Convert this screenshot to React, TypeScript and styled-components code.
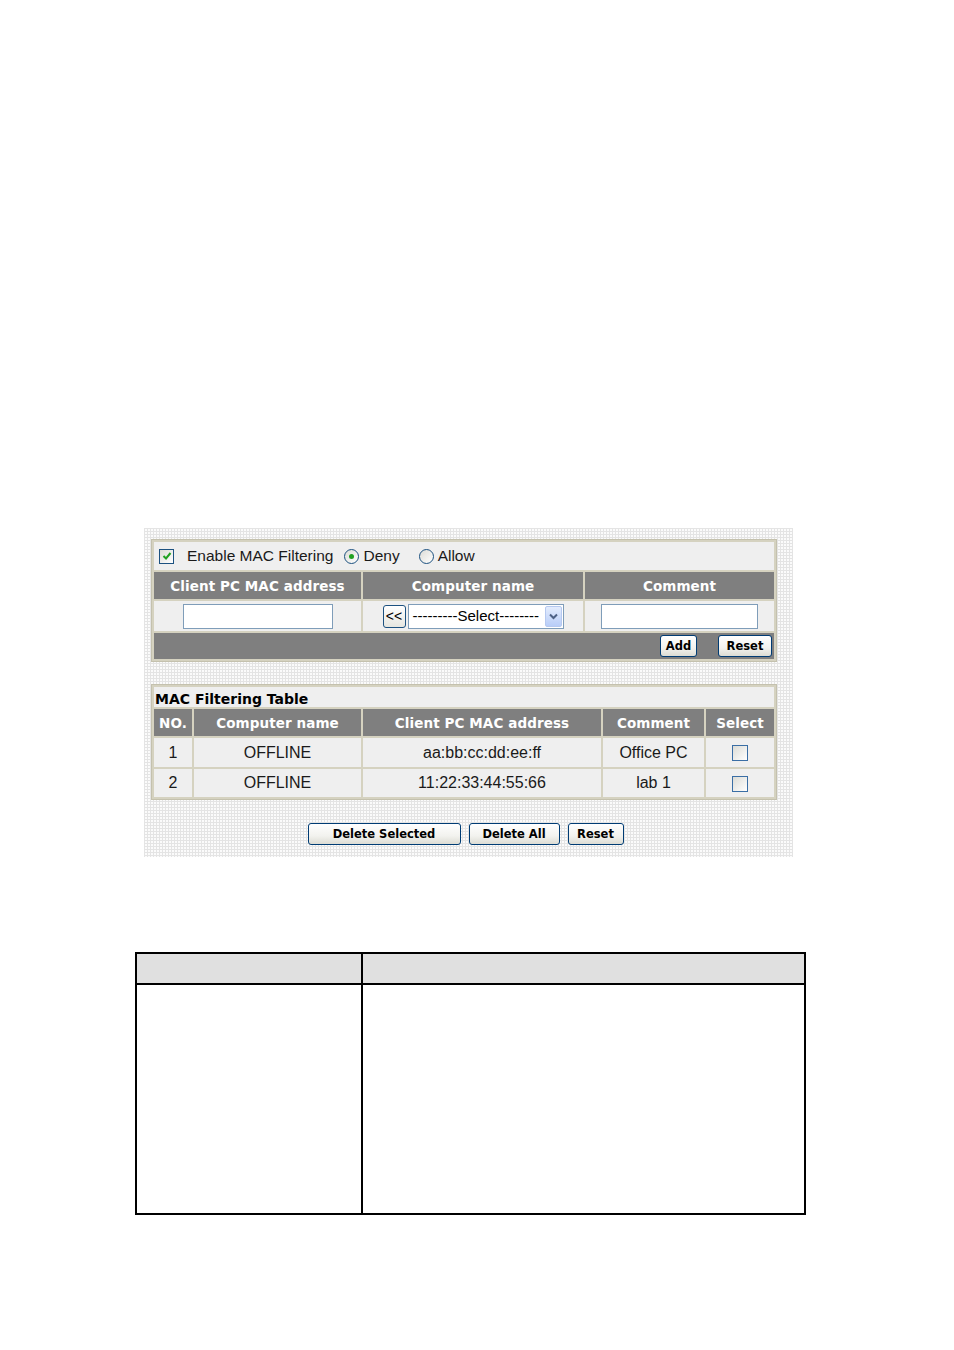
import React from 'react';
import styled, { createGlobalStyle } from 'styled-components';

const GlobalStyle = createGlobalStyle`
  html, body {
    margin: 0;
    padding: 0;
    background: #fff;
  }
  body {
    font-family: "Liberation Sans", Arial, sans-serif;
  }
`;

const Page = styled.div`
  width: 954px;
  height: 1350px;
  padding-top: 528px;
  box-sizing: border-box;
  display: flex;
  flex-direction: column;
`;

const Shot = styled.div`
  margin-left: 144px;
  width: 649px;
  height: 329px;
  box-sizing: border-box;
  padding: 11px 16px 0 7px;
  background-color: #fbfbfb;
  background-image: linear-gradient(#e4e4e4 1px, transparent 1px),
    linear-gradient(90deg, #e4e4e4 1px, transparent 1px);
  background-size: 3px 3px;
  display: flex;
  flex-direction: column;
`;

const Grid = styled.table<{ $mt?: number }>`
  width: 626px;
  box-sizing: border-box;
  margin-top: ${(p) => p.$mt ?? 0}px;
  border-collapse: separate;
  border-spacing: 2px;
  background: #d5d2c0;
  border: 1px solid #c4c1ae;
  table-layout: fixed;
`;

const Cell = styled.td<{ $h: number; $align?: string }>`
  height: ${(p) => p.$h}px;
  padding: 0;
  background: #efefef;
  text-align: ${(p) => p.$align ?? 'center'};
  font-size: 16px;
  line-height: 18px;
  color: #1a1a1a;
  vertical-align: middle;
`;

const Head = styled.td<{ $h: number }>`
  height: ${(p) => p.$h}px;
  padding: 0;
  background: #7f7f7f;
  color: #fff;
  text-align: center;
  font-family: "DejaVu Sans", Verdana, sans-serif;
  font-weight: bold;
  font-size: 13.5px;
  line-height: 16px;
  letter-spacing: 0.1px;
  white-space: nowrap;
`;

const BarCell = styled.td`
  height: 26px;
  padding: 0 2px 0 0;
  background: #7f7f7f;
  text-align: right;
  line-height: 16px;
`;

const TitleCell = styled.td`
  height: 20px;
  padding: 0 0 0 1px;
  background: #efefef;
  font-family: "DejaVu Sans", Verdana, sans-serif;
  font-weight: bold;
  font-size: 14px;
  color: #000;
  text-align: left;
  vertical-align: bottom;
  line-height: 16px;
`;

const Toggles = styled.div`
  display: flex;
  align-items: center;
  padding-left: 5px;
  font-size: 15.5px;
  color: #1a1a1a;
`;

const Check = styled.span`
  display: inline-flex;
  align-items: center;
  justify-content: center;
  width: 13px;
  height: 13px;
  border: 1px solid #1c5180;
  background: linear-gradient(135deg, #dcdcd6, #fff);
`;

const Radio = styled.span<{ $on?: boolean }>`
  display: inline-flex;
  align-items: center;
  justify-content: center;
  width: 13px;
  height: 13px;
  border-radius: 50%;
  border: 1px solid #1c5180;
  background: linear-gradient(135deg, #dcdcd6, #fff);
  margin-right: 4px;
  &::after {
    content: '';
    display: ${(p) => (p.$on ? 'block' : 'none')};
    width: 5px;
    height: 5px;
    border-radius: 50%;
    background: #21a121;
  }
`;

const Label = styled.span<{ $ml?: number }>`
  margin-left: ${(p) => p.$ml ?? 0}px;
  display: inline-flex;
  align-items: center;
`;

const TextInput = styled.div<{ $w: number }>`
  display: inline-block;
  width: ${(p) => p.$w}px;
  height: 23px;
  border: 1px solid #7f9db9;
  background: #fff;
  vertical-align: middle;
`;

const PickRow = styled.div`
  display: flex;
  align-items: center;
  justify-content: center;
  gap: 2px;
`;

const SmallBtn = styled.div`
  width: 23px;
  height: 23px;
  box-sizing: border-box;
  border: 1px solid #1c5180;
  border-radius: 3px;
  background: linear-gradient(#fff, #e6e6e0);
  font-size: 14px;
  line-height: 21px;
  text-align: center;
  color: #000;
`;

const SelectBox = styled.div`
  width: 156px;
  height: 25px;
  box-sizing: border-box;
  border: 1px solid #7f9db9;
  background: #fff;
  display: flex;
  align-items: center;
  justify-content: space-between;
  padding: 0 1px 0 4px;
  font-size: 15px;
  color: #000;
`;

const Arrow = styled.span`
  width: 17px;
  height: 21px;
  background: linear-gradient(#e3ecfd, #b8cdf8);
  border: 1px solid #b6c9f0;
  box-sizing: border-box;
  display: inline-flex;
  align-items: center;
  justify-content: center;
  border-radius: 2px;
`;

const Button = styled.button<{ $w: number; $mr?: number }>`
  width: ${(p) => p.$w}px;
  height: 22px;
  margin-right: ${(p) => p.$mr ?? 0}px;
  padding: 0;
  border: 1px solid #003c74;
  border-radius: 3px;
  background: linear-gradient(#ffffff, #f2f2ee 60%, #dcdcd4);
  font-family: "DejaVu Sans", Verdana, sans-serif;
  font-weight: bold;
  font-size: 11.5px;
  color: #000;
  vertical-align: middle;
`;

const ButtonRow = styled.div`
  display: flex;
  justify-content: center;
  gap: 8px;
  margin-top: 23px;
  padding-left: 3px;
`;

const RowBox = styled.span`
  display: inline-block;
  width: 14px;
  height: 14px;
  border: 1.5px solid #3a6ea5;
  background: linear-gradient(135deg, #dcdcd6, #fff);
  vertical-align: middle;
`;

const Doc = styled.table`
  margin: 95px 0 0 135px;
  width: 671px;
  border-collapse: collapse;
  table-layout: fixed;
`;

const DocHead = styled.td<{ $w?: number }>`
  height: 29px;
  background: #e0e0e0;
  border: 2px solid #000;
  width: ${(p) => (p.$w ? `${p.$w}px` : 'auto')};
  padding: 0;
`;

const DocCell = styled.td`
  height: 228px;
  border: 2px solid #000;
  padding: 0;
`;

const rows = [
  { no: 1, name: 'OFFLINE', mac: 'aa:bb:cc:dd:ee:ff', comment: 'Office PC' },
  { no: 2, name: 'OFFLINE', mac: '11:22:33:44:55:66', comment: 'lab 1' },
];

export default function App() {
  return (
    <>
      <GlobalStyle />
      <Page>
        <Shot>
          <Grid>
            <colgroup>
              <col style={{ width: 207 }} />
              <col style={{ width: 220 }} />
              <col style={{ width: 189 }} />
            </colgroup>
            <tbody>
              <tr>
                <Cell $h={28} $align="left" colSpan={3}>
                  <Toggles>
                    <Check>
                      <svg width="10" height="10" viewBox="0 0 10 10">
                        <path d="M1.5 5 L4 7.5 L8.5 2" fill="none" stroke="#21a121" strokeWidth="2" />
                      </svg>
                    </Check>
                    <Label $ml={13}>Enable MAC Filtering</Label>
                    <Label $ml={11}>
                      <Radio $on />
                      Deny
                    </Label>
                    <Label $ml={19}>
                      <Radio />
                      Allow
                    </Label>
                  </Toggles>
                </Cell>
              </tr>
              <tr>
                <Head $h={27}>Client PC MAC address</Head>
                <Head $h={27}>Computer name</Head>
                <Head $h={27}>Comment</Head>
              </tr>
              <tr>
                <Cell $h={30}>
                  <TextInput $w={148} />
                </Cell>
                <Cell $h={30}>
                  <PickRow>
                    <SmallBtn>&lt;&lt;</SmallBtn>
                    <SelectBox>
                      <span>---------Select--------</span>
                      <Arrow>
                        <svg width="9" height="7" viewBox="0 0 9 7">
                          <path d="M1 1.5 L4.5 5 L8 1.5" fill="none" stroke="#4d6185" strokeWidth="2" />
                        </svg>
                      </Arrow>
                    </SelectBox>
                  </PickRow>
                </Cell>
                <Cell $h={30}>
                  <TextInput $w={155} />
                </Cell>
              </tr>
              <tr>
                <BarCell colSpan={3}>
                  <Button $w={37} $mr={21}>Add</Button>
                  <Button $w={54}>Reset</Button>
                </BarCell>
              </tr>
            </tbody>
          </Grid>

          <Grid $mt={22}>
            <colgroup>
              <col style={{ width: 38 }} />
              <col style={{ width: 167 }} />
              <col style={{ width: 238 }} />
              <col style={{ width: 101 }} />
              <col style={{ width: 68 }} />
            </colgroup>
            <tbody>
              <tr>
                <TitleCell colSpan={5}>MAC Filtering Table</TitleCell>
              </tr>
              <tr>
                <Head $h={27}>NO.</Head>
                <Head $h={27}>Computer name</Head>
                <Head $h={27}>Client PC MAC address</Head>
                <Head $h={27}>Comment</Head>
                <Head $h={27}>Select</Head>
              </tr>
              {rows.map((r, i) => (
                <tr key={r.no}>
                  <Cell $h={i === 0 ? 29 : 28}>{r.no}</Cell>
                  <Cell $h={i === 0 ? 29 : 28}>{r.name}</Cell>
                  <Cell $h={i === 0 ? 29 : 28}>{r.mac}</Cell>
                  <Cell $h={i === 0 ? 29 : 28}>{r.comment}</Cell>
                  <Cell $h={i === 0 ? 29 : 28}>
                    <RowBox />
                  </Cell>
                </tr>
              ))}
            </tbody>
          </Grid>

          <ButtonRow>
            <Button $w={153}>Delete Selected</Button>
            <Button $w={91}>Delete All</Button>
            <Button $w={56}>Reset</Button>
          </ButtonRow>
        </Shot>

        <Doc>
          <tbody>
            <tr>
              <DocHead $w={224} />
              <DocHead />
            </tr>
            <tr>
              <DocCell />
              <DocCell />
            </tr>
          </tbody>
        </Doc>
      </Page>
    </>
  );
}
